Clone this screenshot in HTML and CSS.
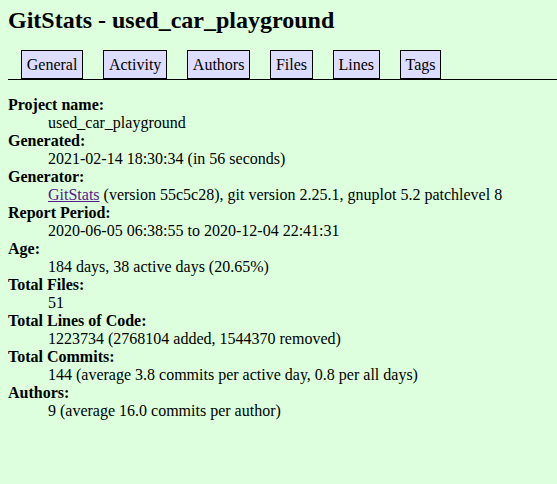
FILE: index.html
```html
<!DOCTYPE html>
<html>
<head>
<meta charset="utf-8">
<title>GitStats - used_car_playground</title>
<link rel="stylesheet" href="styles.css">
</head>
<body>
<h1 class="title">GitStats - used_car_playground</h1>
<nav class="nav">
  <a class="tab" href="#">General</a>
  <a class="tab" href="#">Activity</a>
  <a class="tab" href="#">Authors</a>
  <a class="tab" href="#">Files</a>
  <a class="tab" href="#">Lines</a>
  <a class="tab" href="#">Tags</a>
</nav>
<dl class="info">
  <dt>Project name:</dt><dd>used_car_playground</dd>
  <dt>Generated:</dt><dd>2021-02-14 18:30:34 (in 56 seconds)</dd>
  <dt>Generator:</dt><dd><a class="link" href="#">GitStats</a> (version 55c5c28), git version 2.25.1, gnuplot 5.2 patchlevel 8</dd>
  <dt>Report Period:</dt><dd>2020-06-05 06:38:55 to 2020-12-04 22:41:31</dd>
  <dt>Age:</dt><dd>184 days, 38 active days (20.65%)</dd>
  <dt>Total Files:</dt><dd>51</dd>
  <dt>Total Lines of Code:</dt><dd>1223734 (2768104 added, 1544370 removed)</dd>
  <dt>Total Commits:</dt><dd>144 (average 3.8 commits per active day, 0.8 per all days)</dd>
  <dt>Authors:</dt><dd>9 (average 16.0 commits per author)</dd>
</dl>
</body>
</html>
```

FILE: styles.css
```css
html, body {
  background-color: #ddffdd;
}
body {
  margin: 8px 0 8px 8px;
  color: black;
  font-family: "Liberation Serif", "Times New Roman", serif;
  font-size: 16px;
  line-height: 18px;
}
.title {
  font-size: 24px;
  font-weight: bold;
  line-height: 27px;
  margin: -1px 0 16px 0;
}
.nav {
  display: flex;
  align-items: flex-end;
  gap: 20px;
  padding-left: 13px;
  border-bottom: 1px solid black;
}
.tab {
  display: block;
  padding: 5px 4.75px 4px 4.75px;
  border: 1px solid black;
  background-color: #ddddff;
  color: black;
  text-decoration: none;
}
.info {
  margin: 16px 0 0 0;
}
.info dt {
  font-weight: bold;
}
.info dd {
  margin-left: 40px;
}
.link {
  color: #551a8b;
  text-decoration: underline;
}
```
